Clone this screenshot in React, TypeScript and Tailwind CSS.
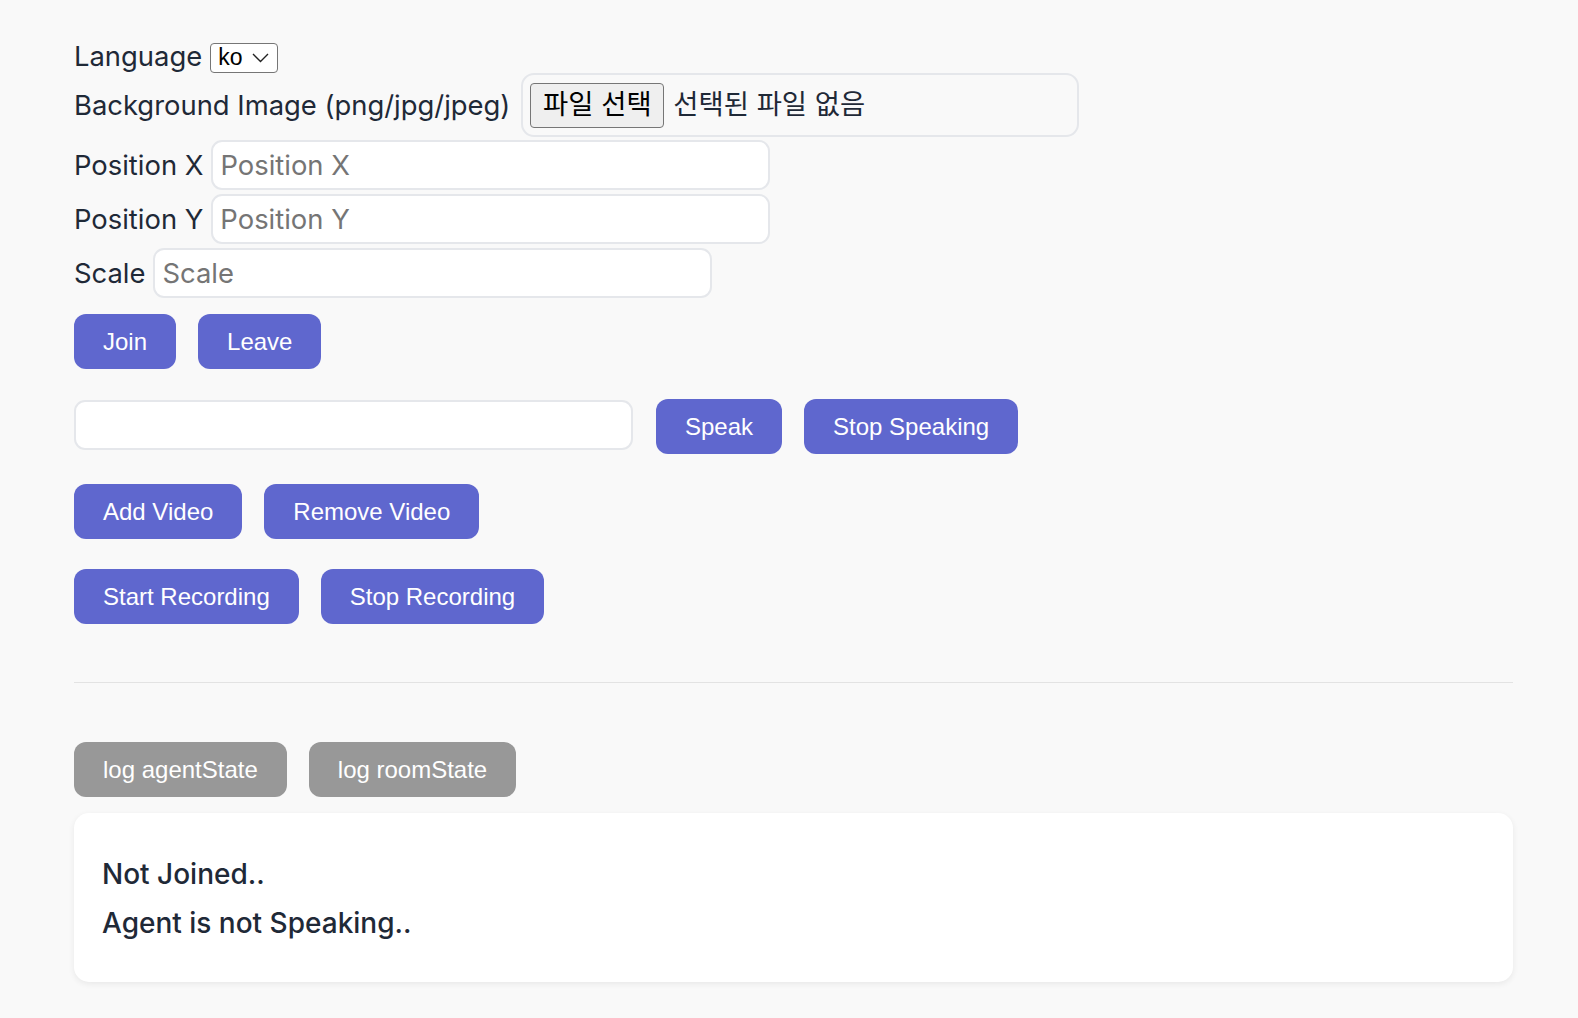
import { useState } from 'react'

const labelCls = "text-[27.4px] leading-[34px] text-[#1f2937] font-['Inter','Noto_Sans_CJK_KR',sans-serif]"
const inputCls = "h-[50px] w-[559px] rounded-[11px] border-2 border-[#e5e7eb] bg-white px-[7px] text-[27.4px] text-[#1f2937] font-['Inter',sans-serif] placeholder:text-[#757575] outline-none"
const btnCls = "h-[55px] px-[29px] rounded-[12px] bg-[#5f67ce] text-white text-[24px] font-['Liberation_Sans',Arial,sans-serif] flex items-center justify-center"
const grayBtnCls = "h-[55px] px-[29px] rounded-[12px] bg-[#989898] text-white text-[24px] font-['Liberation_Sans',Arial,sans-serif] flex items-center justify-center"

function App() {
  const [posX, setPosX] = useState("")
  const [posY, setPosY] = useState("")
  const [scale, setScale] = useState("")
  const [text, setText] = useState("")
  const [joined] = useState(false)
  const [speaking] = useState(false)

  return (
    <main className="min-h-screen bg-[#f9f9f9]">
      <div className="ml-[74px] w-[1439px] pt-[39px] pb-[37px] flex flex-col">
        <div className="h-[34px] flex items-center gap-[8px]">
          <span className={labelCls}>Language</span>
          <div className="mt-[3px] h-[30px] w-[68px] flex items-center justify-between pl-[7px] pr-[8px] bg-white border border-[#767676] rounded-[4px] text-[23px] text-black font-['Liberation_Sans',Arial,sans-serif]">
            <span>ko</span>
            <svg width="17" height="10" viewBox="0 0 17 10" fill="none">
              <polyline points="1,1 8.5,8.5 16,1" stroke="#222" strokeWidth="1.4" />
            </svg>
          </div>
        </div>

        <div className="h-[64px] flex items-center gap-[11px]">
          <span className={labelCls}>Background Image (png/jpg/jpeg)</span>
          <label className="h-[64px] w-[558px] flex items-center gap-[9px] px-[7px] rounded-[13px] border-2 border-[#e5e7eb] cursor-pointer">
            <span className="h-[45px] w-[134px] flex items-center justify-center bg-[#efefef] border border-[#767676] rounded-[4px] text-[27.4px] text-black font-['Inter','Noto_Sans_CJK_KR',sans-serif]">파일 선택</span>
            <span className="text-[27.4px] text-[#1f2937] font-['Inter','Noto_Sans_CJK_KR',sans-serif]">선택된 파일 없음</span>
            <input type="file" accept="image/png, image/jpg, image/jpeg" className="hidden" />
          </label>
        </div>

        <div className="mt-[3px] flex items-center gap-[8px]">
          <span className={labelCls}>Position X</span>
          <input className={inputCls} placeholder="Position X" value={posX} onChange={(e) => setPosX(e.target.value)} />
        </div>
        <div className="mt-[4px] flex items-center gap-[8px]">
          <span className={labelCls}>Position Y</span>
          <input className={inputCls} placeholder="Position Y" value={posY} onChange={(e) => setPosY(e.target.value)} />
        </div>
        <div className="mt-[4px] flex items-center gap-[8px]">
          <span className={labelCls}>Scale</span>
          <input className={inputCls} placeholder="Scale" value={scale} onChange={(e) => setScale(e.target.value)} />
        </div>

        <div className="mt-[16px] flex gap-[22px]">
          <button className={btnCls}>Join</button>
          <button className={btnCls}>Leave</button>
        </div>

        <div className="mt-[30px] flex items-start gap-[23px]">
          <input className={inputCls + " mt-[1px]"} value={text} onChange={(e) => setText(e.target.value)} />
          <div className="flex gap-[22px]">
            <button className={btnCls}>Speak</button>
            <button className={btnCls}>Stop Speaking</button>
          </div>
        </div>

        <div className="mt-[30px] flex gap-[22px]">
          <button className={btnCls}>Add Video</button>
          <button className={btnCls}>Remove Video</button>
        </div>

        <div className="mt-[30px] flex gap-[22px]">
          <button className={btnCls}>Start Recording</button>
          <button className={btnCls}>Stop Recording</button>
        </div>

        <hr className="mt-[58px] border-t border-[#e3e3e3]" />

        <div className="mt-[59px] flex gap-[22px]">
          <button className={grayBtnCls}>log agentState</button>
          <button className={grayBtnCls}>log roomState</button>
        </div>

        <div className="mt-[16px] rounded-[15px] bg-white shadow-[0_2px_6px_rgba(0,0,0,0.07)] pl-[28px] pt-[44px] pb-[42px] flex flex-col gap-[15px] font-['Inter',sans-serif] font-medium text-[28px] leading-[34px] text-[#1f2937]">
          <p>{joined ? "Joined" : "Not Joined.."}</p>
          <p>{speaking ? "Agent is Speaking.." : "Agent is not Speaking.."}</p>
        </div>
      </div>
    </main>
  )
}
export default App
